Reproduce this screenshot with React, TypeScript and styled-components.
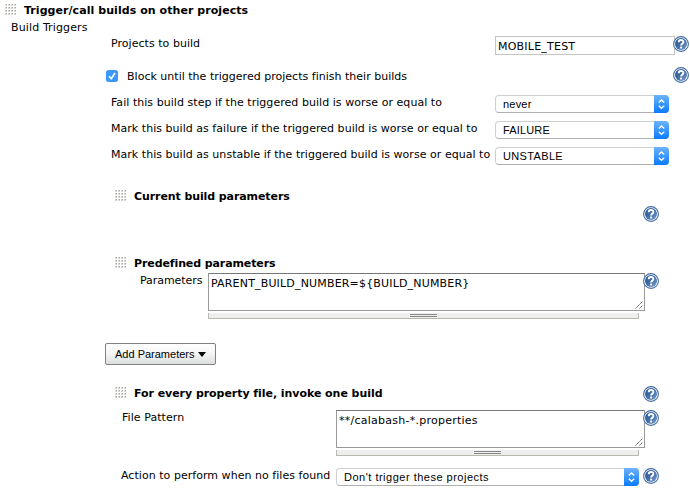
import React from "react";
import styled, { createGlobalStyle } from "styled-components";

const Global = createGlobalStyle`
  body { margin: 0; background: #fff; }
  *, *::after { box-sizing: border-box; }
`;

const Page = styled.main`
  width: 690px;
  height: 500px;
  overflow: hidden;
  background: #fff;
  color: #000;
  font: 11px/14px Verdana, "DejaVu Sans", sans-serif;
  display: flex;
  flex-direction: column;
`;

const Row = styled.div<{ $h: number; $left: number; $pad?: number }>`
  flex: none;
  display: flex;
  align-items: flex-start;
  height: ${(p) => p.$h}px;
  padding-left: ${(p) => p.$left}px;
  padding-top: ${(p) => p.$pad ?? 0}px;
`;

const Label = styled.label<{ $w?: number; $top?: number; $ls?: number }>`
  flex: none;
  width: ${(p) => (p.$w ? `${p.$w}px` : "auto")};
  margin-top: ${(p) => p.$top ?? 1}px;
  letter-spacing: ${(p) => p.$ls ?? 0}px;
  white-space: nowrap;
`;

const Title = styled.h2<{ $ls?: number; $w?: number }>`
  flex: none;
  width: ${(p) => (p.$w ? `${p.$w}px` : "auto")};
  margin: 1px 0 0 7px;
  font-size: 11px;
  line-height: 14px;
  font-weight: bold;
  letter-spacing: ${(p) => p.$ls ?? 0}px;
  white-space: nowrap;
`;

const GripIcon = styled.svg`
  flex: none;
  width: 12px;
  height: 12px;
  margin-top: 1px;
`;

const TextInput = styled.div`
  flex: none;
  width: 180px;
  height: 19px;
  margin-top: 1px;
  padding: 3px 2px 0;
  border: 1px solid #c4c4c4;
  letter-spacing: 0.22px;
  white-space: nowrap;
`;

const Select = styled.div<{ $w: number; $ls?: number }>`
  flex: none;
  display: flex;
  justify-content: space-between;
  width: ${(p) => p.$w}px;
  height: 18px;
  padding-left: 7px;
  border: 1px solid #cfcfcf;
  border-bottom-color: #b0b0b0;
  border-right: 0;
  border-radius: 4px;
  font: 11px/17px "Liberation Sans", Arial, sans-serif;
  letter-spacing: ${(p) => p.$ls ?? 0}px;
  white-space: nowrap;
`;

const Stepper = styled.span`
  flex: none;
  width: 15px;
  height: 18px;
  margin-top: -1px;
  border-radius: 0 4px 4px 0;
  background: linear-gradient(#6cb3fa, #0a7bff);
  svg { display: block; }
`;

const Check = styled.span`
  flex: none;
  width: 12px;
  height: 12px;
  margin-top: 9px;
  margin-right: 9px;
  border-radius: 2.5px;
  background: #3b99fc;
  svg { display: block; }
`;

const HelpIcon = styled.svg<{ $ml: number; $top?: number }>`
  flex: none;
  position: relative;
  width: 16px;
  height: 16px;
  margin-left: ${(p) => p.$ml}px;
  margin-top: ${(p) => p.$top ?? 0}px;
`;

const AreaGroup = styled.div<{ $w: number }>`
  flex: none;
  width: ${(p) => p.$w}px;
`;

const Area = styled.div<{ $ls?: number }>`
  display: flex;
  justify-content: space-between;
  height: 38px;
  padding: 3px 1px 1px 2px;
  border: 1px solid #999;
  border-top-color: #777;
  letter-spacing: ${(p) => p.$ls ?? 0}px;
  white-space: nowrap;
  svg { align-self: flex-end; flex: none; }
`;

const Handle = styled.div`
  display: flex;
  justify-content: center;
  height: 6px;
  margin: 2px 6px 0 0;
  padding-top: 1px;
  background: #eee;
  border: solid #b8b8b0;
  border-width: 0 1px 1px;
  &::after {
    content: "";
    width: 27px;
    height: 3px;
    border: solid #888;
    border-width: 1px 0;
  }
`;

const Button = styled.button`
  flex: none;
  display: flex;
  align-items: center;
  gap: 4px;
  width: 111px;
  height: 22px;
  padding: 0 0 0 9px;
  border: 1px solid #808080;
  border-radius: 2px;
  background: linear-gradient(#fff, #f6f6f6 45%, #dcdfdf);
  color: #000;
  font: 11px/14px "Liberation Sans", Arial, sans-serif;
  white-space: nowrap;
`;

const GRIP_STEPS = [0, 3, 6, 9];

function Grip() {
  return (
    <GripIcon viewBox="0 0 12 12" shapeRendering="crispEdges">
      {GRIP_STEPS.map((y) =>
        GRIP_STEPS.map((x) => (
          <React.Fragment key={`${x}-${y}`}>
            <rect x={x} y={y} width="2" height="2" fill="#d6d6d2" />
            <rect x={x + 1} y={y} width="1" height="1" fill="#a6a6a0" />
          </React.Fragment>
        ))
      )}
    </GripIcon>
  );
}

function Help({ ml, top }: { ml: number; top?: number }) {
  return (
    <HelpIcon $ml={ml} $top={top} viewBox="0 0 16 16">
      <defs>
        <linearGradient id="help" x1="0" y1="0" x2="1" y2="1">
          <stop offset="0" stopColor="#244f8e" />
          <stop offset=".5" stopColor="#426da8" />
          <stop offset="1" stopColor="#7ba0ce" />
        </linearGradient>
      </defs>
      <circle cx="8" cy="8" r="7.4" fill="#fff" stroke="#446da5" strokeWidth="1.1" />
      <circle cx="8" cy="8" r="6" fill="url(#help)" />
      <path d="M5.7 6.2C5.7 3.3 10.4 3.3 10.4 6.1C10.4 7.7 8.1 7.6 8.1 9.6" fill="none" stroke="#fff" strokeWidth="1.9" />
      <rect x="7.1" y="10.6" width="2" height="1.9" fill="#fff" />
    </HelpIcon>
  );
}

function Choice({ w, ls, children }: { w: number; ls?: number; children: React.ReactNode }) {
  return (
    <Select $w={w} $ls={ls}>
      <span>{children}</span>
      <Stepper>
        <svg width="15" height="18" fill="none" stroke="#fff" strokeWidth="1.3">
          <path d="M4.8 7.4 7.5 4.9l2.7 2.5M4.8 10.8l2.7 2.5 2.7-2.5" />
        </svg>
      </Stepper>
    </Select>
  );
}

function TextBox({ w, ls, children }: { w: number; ls?: number; children: React.ReactNode }) {
  return (
    <AreaGroup $w={w}>
      <Area $ls={ls}>
        <span>{children}</span>
        <svg width="8" height="8" stroke="#555" strokeWidth="1" strokeDasharray="1.4 .5">
          <path d="M.5 7.5l7-7M4.5 7.5l3-3" />
        </svg>
      </Area>
      <Handle />
    </AreaGroup>
  );
}

export default function App() {
  return (
    <Page>
      <Global />
      <Row $h={20} $left={5} $pad={3}>
        <Grip />
        <Title $ls={0.06}>Trigger/call builds on other projects</Title>
      </Row>
      <Row $h={15} $left={11}>
        <Label $ls={0.13}>Build Triggers</Label>
      </Row>
      <Row $h={26} $left={111}>
        <Label $w={384} $top={2} $ls={0.04}>Projects to build</Label>
        <TextInput>MOBILE_TEST</TextInput>
        <Help ml={-2} top={1} />
      </Row>
      <Row $h={34} $left={106}>
        <Check>
          <svg width="12" height="12" fill="none" stroke="#fff" strokeWidth="1.6">
            <path d="M3 6.3 5.2 8.7 9 3" />
          </svg>
        </Check>
        <Label $w={546} $top={9} $ls={0.015}>Block until the triggered projects finish their builds</Label>
        <Help ml={0} top={6} />
      </Row>
      <Row $h={26} $left={111}>
        <Label $w={384} $ls={0.045}>Fail this build step if the triggered build is worse or equal to</Label>
        <Choice w={174} ls={0.2}>never</Choice>
      </Row>
      <Row $h={26} $left={111}>
        <Label $w={384} $ls={0.035}>Mark this build as failure if the triggered build is worse or equal to</Label>
        <Choice w={174} ls={0.15}>FAILURE</Choice>
      </Row>
      <Row $h={26} $left={111}>
        <Label $w={384} $ls={0.035}>Mark this build as unstable if the triggered build is worse or equal to</Label>
        <Choice w={174} ls={0.35}>UNSTABLE</Choice>
      </Row>
      <Row $h={33} $left={115} $pad={16}>
        <Grip />
        <Title $ls={-0.09}>Current build parameters</Title>
      </Row>
      <Row $h={50} $left={643}>
        <Help ml={0} />
      </Row>
      <Row $h={17} $left={115}>
        <Grip />
        <Title $ls={-0.1}>Predefined parameters</Title>
      </Row>
      <Row $h={70} $left={140}>
        <Label $w={68} $ls={-0.05}>Parameters</Label>
        <TextBox w={437} ls={0.17}>{"PARENT_BUILD_NUMBER=${BUILD_NUMBER}"}</TextBox>
        <Help ml={-2} />
      </Row>
      <Row $h={43} $left={105}>
        <Button>
          Add Parameters
          <svg width="8" height="5"><path d="M0 0h8L4 5z" /></svg>
        </Button>
      </Row>
      <Row $h={24} $left={115}>
        <Grip />
        <Title $w={509} $ls={-0.05}>For every property file, invoke one build</Title>
        <Help ml={0} />
      </Row>
      <Row $h={58} $left={122}>
        <Label $w={214} $ls={0.06}>File Pattern</Label>
        <TextBox w={309} ls={0.25}>**/calabash-*.properties</TextBox>
        <Help ml={-2} />
      </Row>
      <Row $h={32} $left={121}>
        <Label $w={215} $ls={0.04}>Action to perform when no files found</Label>
        <Choice w={303} ls={0.5}>Don't trigger these projects</Choice>
        <Help ml={4} />
      </Row>
    </Page>
  );
}
